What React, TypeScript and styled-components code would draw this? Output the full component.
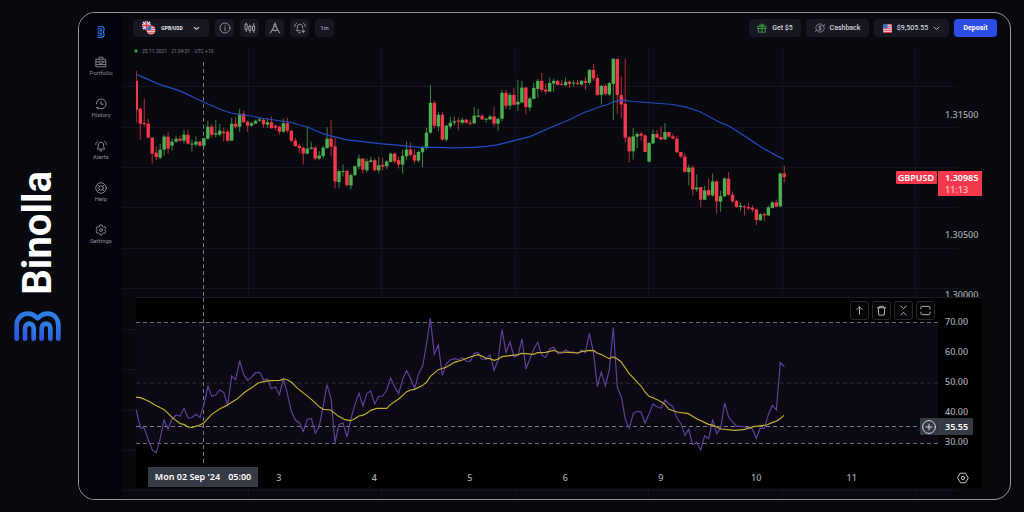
import React from "react";
import styled, { createGlobalStyle, css } from "styled-components";

const color = {
  page: "#07090e",
  sidebar: "#03030b",
  frame: "#97979b",
  control: "#171722",
  muted: "#8f8f99",
  axis: "#a9abb2",
  tag: "#363a45",
  up: "#4caf50",
  down: "#f5384b",
  accent: "#2d4de6",
  grid: "#13131f",
};

const GlobalStyle = createGlobalStyle`
  *, *::before, *::after { box-sizing: border-box; }
  body {
    margin: 0;
    background: ${color.page};
    color: #fff;
    font-family: Roboto, "Liberation Sans", sans-serif;
  }
  svg { display: block; }
`;

/* ---------- page shell ---------- */

const Page = styled.div`
  display: flex;
  min-height: 100vh;
  padding: 12px 13px 12px 0;
`;

const Brand = styled.header`
  display: flex;
  flex: 0 0 78px;
  flex-direction: column;
  align-items: center;
  justify-content: center;
  gap: 16px;
  padding-right: 3px;
`;

const BrandName = styled.h1`
  margin: 0;
  font-size: 40px;
  font-weight: 700;
  line-height: 44px;
  writing-mode: vertical-rl;
  transform: rotate(180deg);
`;

const Frame = styled.div`
  display: flex;
  flex: 1;
  min-width: 0;
  overflow: hidden;
  border: 1px solid ${color.frame};
  border-radius: 17px;
`;

const Sidebar = styled.nav`
  display: flex;
  flex: 0 0 43px;
  flex-direction: column;
  align-items: center;
  padding: 13px 0 0 1px;
  background: ${color.sidebar};
`;

const HomeLink = styled.a`
  display: block;
  margin-bottom: 18px;
`;

const NavList = styled.ul`
  display: flex;
  flex-direction: column;
  gap: 21px;
  margin: 0;
  padding: 0;
  list-style: none;
`;

const NavLink = styled.a`
  display: flex;
  flex-direction: column;
  align-items: center;
  gap: 1px;
  color: ${color.muted};
  font-size: 6px;
  line-height: 8px;
  text-decoration: none;
`;

const Main = styled.main`
  position: relative;
  flex: 1;
  min-width: 0;
  padding-bottom: 11px;
`;

const Backdrop = styled.svg`
  position: absolute;
  inset: 0;
  width: 100%;
  height: 100%;
`;

/* ---------- top bar ---------- */

const TopBar = styled.div`
  position: relative;
  display: flex;
  justify-content: space-between;
  padding: 6px 13px 0 11px;
`;

const Group = styled.div<{ $gap: number }>`
  display: flex;
  gap: ${(p) => p.$gap}px;
`;

const Control = styled.button<{ $width: number; $primary?: boolean }>`
  display: flex;
  align-items: center;
  justify-content: center;
  gap: 5px;
  width: ${(p) => p.$width}px;
  height: 18px;
  padding: 0;
  border: 0;
  border-radius: 4px;
  background: ${(p) => (p.$primary ? color.accent : color.control)};
  color: ${(p) => (p.$primary ? "#fff" : "#d0d0d6")};
  font: ${(p) => (p.$primary ? 700 : 500)} 7px/10px Roboto, sans-serif;
`;

const IconControl = styled(Control)`
  color: #9c9ca6;
  font-size: 6px;
`;

const PairName = styled.span`
  margin: 0 5px 0 0;
  color: #e8e8ec;
  font-size: 5px;
  font-weight: 700;
`;

const Status = styled.div`
  position: relative;
  display: flex;
  align-items: center;
  gap: 4px;
  height: 10px;
  margin: 9px 0 0 12px;
  color: #80808a;
  font-size: 5px;
  line-height: 10px;
`;

const LiveDot = styled.span`
  width: 4px;
  height: 4px;
  border: 1px solid #1f5a26;
  border-radius: 50%;
  background: #4fc45a;
`;

/* ---------- panes ---------- */

const Pane = styled.section<{ $height: number; $solid?: boolean; $ruled?: boolean }>`
  position: relative;
  display: flex;
  height: ${(p) => p.$height}px;
  margin: 0 28px 0 14px;
  background: ${(p) => (p.$solid ? "#000" : "transparent")};
  ${(p) =>
    p.$ruled &&
    css`
      border-bottom: 1px solid #1b1c26;
    `}
`;

const Plot = styled.div`
  position: relative;
  flex: 1;
  min-width: 0;
`;

const PlotSvg = styled.svg`
  width: 100%;
  height: 100%;
`;

const Scale = styled.div`
  position: relative;
  flex: 0 0 44px;
`;

const Ticks = styled.ul<{ $row: number; $top: number }>`
  height: 100%;
  margin: 0;
  padding: ${(p) => p.$top}px 0 0 7px;
  overflow: hidden;
  list-style: none;
  color: ${color.axis};
  font: 500 9px/${(p) => p.$row}px "Noto Sans", sans-serif;
`;

const PriceTag = styled.div`
  position: absolute;
  top: 115px;
  left: 0;
  width: 44px;
  padding: 0 0 0 7px;
  background: ${color.down};
  font: 600 9px/13px "Noto Sans", sans-serif;
`;

const Countdown = styled.div`
  color: #fbc3c9;
  font-weight: 500;
  line-height: 12px;
`;

const SymbolTag = styled.div`
  position: absolute;
  top: 115px;
  right: 1px;
  padding: 0 3px 0 2px;
  border-radius: 1px;
  background: ${color.down};
  font: 600 9px/13px "Noto Sans", sans-serif;
`;

const CrossValue = styled.div`
  position: absolute;
  top: 120px;
  left: -18px;
  display: flex;
  width: 53px;
  height: 17px;
  border-radius: 1px;
  background: ${color.tag};
  font: 600 9px/17px "Noto Sans", sans-serif;
`;

const AddButton = styled.button`
  display: grid;
  place-items: center;
  width: 18px;
  margin-right: 7px;
  padding: 0;
  border: 0;
  border-right: 1px solid #2a2d37;
  background: none;
  color: #d5d7dd;
`;

const PaneTools = styled.div`
  position: absolute;
  top: 3px;
  right: 3px;
  display: flex;
  gap: 3px;
`;

const ToolButton = styled.button`
  display: grid;
  place-items: center;
  width: 19px;
  height: 19px;
  padding: 0;
  border: 1px solid #27272c;
  border-radius: 3px;
  background: #040406;
  color: #bfc0c5;
`;

const Days = styled.ol`
  display: grid;
  flex: 1;
  grid-template-columns: 190fr repeat(7, 191fr) 77fr;
  margin: 0;
  padding: 0;
  list-style: none;
  color: ${color.axis};
  font: 500 9px/20px "Noto Sans", sans-serif;
  text-align: center;
`;

const Day = styled.li<{ $first?: boolean }>`
  ${(p) => p.$first && "grid-column-start: 2;"}
`;

const TimeTag = styled.time`
  position: absolute;
  top: -1px;
  left: 12px;
  display: flex;
  align-items: center;
  justify-content: center;
  gap: 8px;
  width: 110px;
  height: 20px;
  background: ${color.tag};
  font: 600 9px/20px "Noto Sans", sans-serif;
`;

const ScaleSettings = styled.button`
  display: grid;
  flex: 0 0 44px;
  place-items: center;
  padding: 0 0 0 6px;
  border: 0;
  background: none;
  color: #c5c6cb;
`;

/* ---------- icons ---------- */

type IconProps = { size?: number; width?: number; box?: number; children: React.ReactNode };

const Icon = ({ size = 12, width = 2, box = 24, children }: IconProps) => (
  <svg
    width={size}
    height={size}
    viewBox={`0 0 ${box} ${box}`}
    fill="none"
    stroke="currentColor"
    strokeWidth={width}
    strokeLinecap="round"
    strokeLinejoin="round"
    aria-hidden="true"
  >
    {children}
  </svg>
);

const LogoPaths = ({ id }: { id: string }) => (
  <>
    <defs>
      <linearGradient id={id} x1="0" y1="1" x2="0.5" y2="0">
        <stop offset="0" stopColor="#2f55e6" />
        <stop offset="1" stopColor="#2e7ee2" />
      </linearGradient>
    </defs>
    <g fill="none" stroke={`url(#${id})`} strokeWidth="14" strokeLinecap="round" strokeLinejoin="round">
      <path d="M8 83V43C8 21 23 8 41 8c14 0 22 6 30 14C79 14 87 8 101 8c18 0 32 13 32 35v40" />
      <path d="M33 83V51c0-8 6-13 13-13s13 5 13 13v32" />
      <path d="M83 83V51c0-8 6-13 13-13s13 5 13 13v32" />
    </g>
  </>
);

const BriefcaseIcon = () => (
  <Icon width={1.8}>
    <path d="M8 6V2.500h8V6M2.500 6.500h19v15h-19zM3 11.500h5M16 11.500h5M3 17h18" />
    <ellipse cx="12" cy="12.500" rx="4" ry="2.400" />
  </Icon>
);
const HistoryIcon = () => (
  <Icon width={1.9}>
    <path d="M2.500 12a9.800 9.800 0 1 1 3.300 7.200M12 7v5.500h4.500M2.500 19l3.300.5.300 3" />
  </Icon>
);
const BellShape = () => (
  <path d="M5 17.500c1.500-2 1.800-4 1.800-7.500 0-3.500 2-5.500 5.200-5.500s5.200 2 5.200 5.500c0 3.500.3 5.500 1.800 7.500zM10 21.500h4M1.500 9c0-3 1-5 3.500-6.500M22.500 9c0-3-1-5-3.500-6.500" />
);
const BellIcon = () => (
  <Icon width={1.9}>
    <BellShape />
  </Icon>
);
const HelpIcon = () => (
  <Icon width={1.8}>
    <circle cx="12" cy="12" r="10.500" />
    <circle cx="12" cy="12" r="4.500" />
    <path d="M5 5l3.800 3.800M19 5l-3.800 3.800M5 19l3.800-3.800M19 19l-3.800-3.800" />
  </Icon>
);
const GearIcon = () => (
  <Icon width={1.8}>
    <path d="M10 2h4l.8 3 2.200 1.300 3-.9 2 3.500L19.800 11v2l2.200 2.100-2 3.500-3-.9-2.200 1.300-.8 3h-4l-.8-3L7 17.700l-3 .9-2-3.500L4.200 13v-2L2 8.900l2-3.500 3 .9L9.200 5z" />
    <circle cx="12" cy="12" r="3" />
  </Icon>
);
const InfoIcon = () => (
  <Icon width={1.8}>
    <circle cx="12" cy="12" r="10" />
    <path d="M12 11v6M12 7v.5" />
  </Icon>
);
const CandlesIcon = () => (
  <Icon width={2}>
    <path d="M4.500 2v2M4.500 15v4M12 6v3M12 17v4M19.500 3v5M19.500 17v4" />
    <path d="M2.800 4h3.400v11H2.800zM10.300 9h3.400v8h-3.400zM17.800 8h3.400v9h-3.400z" />
  </Icon>
);
const CompassIcon = () => (
  <Icon width={2.200}>
    <path d="M12 1.500V4M10.500 8.500L3 21.500M13.500 8.500L21 21.500M6.500 15.500c3.700 2.300 7.300 2.300 11 0" />
    <circle cx="12" cy="6.300" r="2.300" />
  </Icon>
);
const AddAlertIcon = () => (
  <Icon width={1.9}>
    <path d="M12 17.500H5c1.500-2 1.800-4 1.800-7.500 0-3.500 2-5.500 5.200-5.500s5.200 2 5.200 5.500v2M9.500 21.500h3M1.500 9c0-3 1-5 3.500-6.500M22.500 9c0-3-1-5-3.500-6.500M18.500 15.500v6M15.500 18.500h6" />
  </Icon>
);
const GiftIcon = () => (
  <Icon size={10}>
    <g stroke="#3fa64c">
      <path d="M2 8h20v5H2zM4 13h16v9H4zM12 8v14M12 8C8 8 6 6 7 3.500 8.500 1 12 3 12 8c0-5 3.500-7 5-4.500C18 6 16 8 12 8" />
    </g>
  </Icon>
);
const CashbackIcon = () => (
  <Icon size={10} width={1.700}>
    <g stroke="#a4a4ac">
      <path d="M3 16.500A10 10 0 0 1 17 3.300M21 7.500A10 10 0 0 1 7 20.700M1.500 20.500l1.500-4 4 1.500M22.500 3.500l-1.500 4-4-1.500" />
      <path d="M15 9c-.6-1.200-1.700-1.600-3-1.600-3.800 0-4 4 0 4.500 4.200.5 4 4.700 0 4.700-1.400 0-2.500-.5-3-1.700M12 6v12" />
    </g>
  </Icon>
);
const Chevron = ({ width }: { width: number }) => (
  <Icon size={7} width={width}>
    <path d="M4 8l8 7 8-7" />
  </Icon>
);
const PlusIcon = () => (
  <Icon size={14} width={1.700}>
    <circle cx="12" cy="12" r="11" />
    <path d="M12 7v10M7 12h10" />
  </Icon>
);
const HexIcon = () => (
  <Icon size={12}>
    <path d="M7 2.500h10L22.500 12 17 21.500H7L1.500 12z" />
    <circle cx="12" cy="12" r="3.200" />
  </Icon>
);

const UsFlag = ({ clip }: { clip: string }) => (
  <g clipPath={`url(#${clip})`}>
    <rect width="18" height="18" fill="#f1e9ea" />
    <path d="M0 1.500h18M0 5.500h18M0 9.500h18M0 13.500h18M0 17h18" stroke="#df3b4c" strokeWidth="2" />
    <rect width="9" height="9" fill="#3a6fc0" />
  </g>
);

const PairFlags = () => (
  <svg width="14" height="14" viewBox="0 0 28 28" aria-hidden="true">
    <defs>
      <clipPath id="uk-clip">
        <rect width="18" height="18" rx="7" />
      </clipPath>
      <clipPath id="us-clip">
        <circle cx="9" cy="9" r="9" />
      </clipPath>
    </defs>
    <g clipPath="url(#uk-clip)">
      <rect width="18" height="18" fill="#2d4fa0" />
      <path d="M0 0l18 18M18 0L0 18" stroke="#f3eef0" strokeWidth="3" />
      <path d="M9 0v18M0 9h18" stroke="#f3eef0" strokeWidth="5" />
      <path d="M9 0v18M0 9h18" stroke="#e03648" strokeWidth="3.200" />
    </g>
    <g transform="translate(9 9)">
      <UsFlag clip="us-clip" />
    </g>
  </svg>
);

const BalanceFlag = () => (
  <svg width="9" height="9" viewBox="0 0 18 18" aria-hidden="true">
    <defs>
      <clipPath id="balance-clip">
        <rect width="18" height="18" rx="5" />
      </clipPath>
    </defs>
    <UsFlag clip="balance-clip" />
  </svg>
);

/* ---------- chart data ---------- */

const FIRST_X = 136.3;
const STEP = 3.975;

/* One hourly candle: direction, high, body top, body bottom, low. */
type Candle = ["u" | "d", number, number, number, number];

const candles: Candle[] = [
  ["d", 71, 81, 110, 123], ["d", 108, 109, 124, 140], ["d", 99, 123.3, 124.5, 127], ["d", 119, 124, 138, 138.5],
  ["d", 137.5, 138, 154, 164], ["d", 147, 153, 157.5, 160.5], ["u", 144, 150, 158, 159.5], ["u", 135, 137, 150, 156],
  ["d", 132, 137, 149, 154], ["u", 139, 142, 146, 151], ["u", 136, 139, 142, 143], ["d", 136, 139, 141, 142],
  ["u", 130, 135, 141, 144], ["d", 130, 135, 144, 145], ["u", 140, 144, 145, 152], ["u", 137, 142, 145, 147],
  ["d", 141, 142, 146, 147], ["u", 138, 138.5, 146, 146], ["u", 121, 127, 139, 140], ["d", 124, 127, 135, 138],
  ["u", 120, 133.5, 135, 138], ["u", 124, 131, 135, 137], ["d", 128, 132, 133.5, 141.5], ["d", 130, 132, 141, 142],
  ["u", 118, 124, 141, 141], ["d", 117, 124, 127, 129], ["u", 109, 114, 127, 132], ["d", 110.5, 114, 122.5, 123],
  ["d", 121, 122, 126, 132], ["u", 122, 123.5, 126, 127], ["u", 120, 121, 124, 124], ["u", 118, 119.7, 121, 122],
  ["d", 119, 120, 124.5, 128], ["u", 118, 122.5, 125, 128], ["d", 117, 122.5, 128.5, 129], ["d", 125, 126, 128, 131],
  ["d", 126, 127, 132, 135], ["u", 119, 123.5, 132, 133], ["d", 118, 123.5, 131, 133], ["d", 130.5, 131, 141, 143],
  ["d", 138, 141, 146.5, 147], ["d", 144, 146, 148.5, 154], ["d", 147, 148, 154, 165], ["u", 127, 149, 154, 155],
  ["u", 142, 148, 149.3, 150], ["d", 146.5, 148, 159, 161], ["u", 151.5, 156, 159, 160.5], ["u", 146, 148, 156.5, 159],
  ["u", 127.5, 139, 148.5, 149], ["d", 120, 139, 147, 156], ["d", 137.7, 146.7, 182, 189], ["u", 170, 171.7, 182.7, 189],
  ["u", 165, 171.5, 172.5, 177], ["d", 170, 171.5, 185.7, 187], ["u", 174, 175.5, 186, 190], ["u", 166, 166.7, 175.7, 176],
  ["u", 155, 159, 167, 170], ["d", 159, 159, 170, 174], ["u", 159, 161.7, 170.7, 173], ["u", 157, 160.7, 162.3, 163],
  ["d", 158.7, 160.7, 170.7, 172], ["u", 157, 165.7, 170.7, 174], ["d", 158, 165.3, 167, 171], ["u", 160.7, 162, 166.7, 169.7],
  ["u", 153, 154, 162.3, 163], ["d", 153, 154, 161.7, 164], ["d", 157, 160.7, 165, 169], ["u", 150, 156.3, 165, 174],
  ["u", 142, 150, 156.7, 160.7], ["d", 142.7, 150, 155.3, 157], ["d", 149, 155.3, 161, 164], ["u", 151, 152.3, 161, 163],
  ["u", 146, 147.7, 152.7, 167.7], ["u", 128, 133, 148, 150], ["u", 85, 103, 133, 134], ["d", 101, 103, 126, 129],
  ["u", 112, 115, 126.7, 131.7], ["d", 112, 115, 140, 141], ["u", 125, 126, 140, 142], ["u", 117, 123, 126.7, 129],
  ["u", 116.7, 121.7, 123, 125.7], ["d", 117.7, 120.7, 122, 130.7], ["u", 117.7, 120, 123, 125], ["d", 119, 120, 123, 124],
  ["d", 120, 123, 124, 126], ["u", 107, 116, 123.7, 124], ["u", 109, 115.7, 117, 118], ["d", 114, 116, 119.7, 120],
  ["u", 118, 119, 120, 123], ["u", 115, 116.7, 119.7, 120], ["d", 107, 116.7, 124, 126.7], ["u", 118, 119, 124, 131],
  ["u", 90, 93, 119, 121.7], ["d", 89.7, 93, 106, 109], ["u", 93, 95, 105.7, 110], ["d", 87.7, 95, 105, 106],
  ["u", 80, 102, 104.7, 111], ["u", 81, 87.7, 102.7, 103], ["d", 87, 87.7, 107.3, 114.7], ["u", 97, 98.7, 107.7, 111],
  ["u", 83, 88, 99, 99.5], ["u", 79, 81, 89, 98], ["d", 73, 81, 90, 92.7], ["d", 83.7, 89.7, 91.7, 94],
  ["u", 77.7, 83, 91.7, 92], ["u", 78.7, 81, 83.7, 92.3], ["d", 80, 81, 85, 85.3], ["d", 80.3, 84, 84.9, 85.7],
  ["u", 77.3, 82, 85.3, 86.3], ["d", 80.7, 81.7, 84, 88.3], ["u", 80.3, 82.7, 83.7, 86.7], ["d", 80, 83, 83.9, 85.3],
  ["u", 80, 81, 84.7, 85.7], ["d", 77.3, 81, 83, 90], ["u", 69, 70, 83, 84.7], ["d", 63.7, 70, 78.3, 81],
  ["d", 74.7, 78, 95, 96.7], ["u", 85, 86, 95, 104.7], ["d", 83.7, 86, 94, 95.7], ["u", 82, 83.3, 94.7, 96],
  ["u", 58.7, 58.7, 84, 120], ["d", 58.7, 59, 95, 113.7], ["d", 76.7, 95, 104.7, 118], ["d", 58.7, 104, 138, 143],
  ["d", 136, 137.7, 151.7, 163], ["u", 128.3, 136.7, 151.7, 160], ["u", 132.3, 134.3, 137, 148.7], ["d", 132.3, 134, 136, 141],
  ["d", 134.3, 135.7, 152.3, 152.7], ["u", 142.7, 143.3, 162, 162.7], ["u", 129.7, 134.3, 143.7, 144.7], ["d", 130.3, 134.3, 138, 138.7],
  ["d", 126.7, 137.3, 140, 140.3], ["u", 123.3, 132.3, 139.7, 140.3], ["d", 132, 132.3, 137, 138.3], ["d", 134, 136.7, 138.7, 140],
  ["d", 136, 139, 152.7, 153], ["d", 152, 152.5, 157, 158.9], ["d", 154, 157, 172.3, 172.7], ["u", 165, 168, 172.7, 186],
  ["d", 166, 168, 190, 196], ["u", 175, 188, 190, 192.3], ["d", 187.3, 187.7, 200.3, 208], ["u", 186.3, 191, 200.3, 200.7],
  ["d", 179, 190.7, 195.7, 197], ["u", 174, 182, 196, 197.3], ["d", 180.7, 182, 202, 214.3], ["u", 191.3, 196.7, 202.3, 212.3],
  ["u", 178, 179, 197, 197], ["d", 172.7, 179, 195.3, 196.3], ["d", 192, 195.3, 202, 203.3], ["d", 200.3, 201.7, 207.7, 208.3],
  ["u", 203, 206.3, 207.7, 211.3], ["d", 205.7, 207, 208, 216], ["d", 203.3, 207.7, 209, 210.7], ["d", 206, 208.3, 210.3, 212.7],
  ["d", 209.3, 210, 220.7, 226], ["u", 213.7, 215, 221, 221], ["d", 213.3, 214.7, 216, 221.7], ["u", 206, 208, 216, 216.7],
  ["u", 202, 203, 208.7, 209], ["d", 200, 203, 207.3, 208], ["u", 173, 174, 207, 208], ["d", 166.3, 174, 177.7, 183],
];

const movingAverage =
  "136,74.500 147,79 158,84 180,91 203,102 220,109.500 230,113 240,115 250,116 262,118.500 290,122.500 308,127.500 323,134 330,136 347,140.300 360,141.700 380,144 405,146.300 420,147.800 437,147.800 453,148.200 473,147.700 487,146.700 497,145.300 510,142 530,137 550,128 567,121 583,113.300 600,107 608,104.700 613,102 623,100.400 633,101.700 647,102.700 673,104.700 687,107.600 700,112 720,122.700 730,126.700 743,135.300 763,148.700 777,156.300 784,159.700";

/* Oscillator readings, one per candle, in thirds of a pixel. */
const rsi = [
  360, 413, 415, 450, 480, 488, 448, 390, 418, 388, 375, 378, 355, 384, 383, 373, 382, 342, 289, 319, 315, 300, 307,
  346, 258, 269, 212, 254, 271, 261, 248, 247, 270, 267, 296, 290, 314, 267, 310, 364, 390, 398, 424, 388, 385, 430,
  412, 352, 284, 325, 457, 403, 399, 441, 385, 343, 309, 348, 310, 303, 342, 319, 318, 300, 264, 291, 311, 268, 242,
  266, 295, 251, 228, 165, 85, 193, 165, 256, 221, 210, 206, 209, 203, 213, 214, 190, 187, 207, 208, 194, 241, 212,
  119, 187, 156, 201, 196, 147, 237, 208, 178, 157, 195, 203, 177, 172, 190, 190, 180, 187, 186, 190, 180, 188, 130,
  185, 290, 246, 288, 238, 113, 293, 320, 388, 415, 370, 364, 366, 399, 372, 342, 350, 355, 330, 342, 350, 385, 401,
  436, 418, 464, 457, 480, 437, 446, 388, 431, 415, 339, 382, 396, 409, 409, 411, 413, 417, 445, 414, 416, 374, 346,
  360, 217, 231,
];

const rsiAverage =
  "407,321 421,323 445,333 469,347 493,359 517,383 541,401 553,404 564,411 576,412 595,407 610,400 635,373 660,356 683,345 695,337 710,328 735,306 755,293 775,279 790,275 810,272 840,271 851,267 863,270 875,277 890,293 935,329 960,352 970,358 992,360 1016,379 1035,389 1052,392 1064,387 1076,378 1088,376 1100,370 1112,361 1130,355 1160,355 1172,343 1196,327 1220,305 1232,300 1244,298 1268,286 1280,276 1291,259 1315,239 1340,231 1363,217 1387,210 1410,201 1434,194 1446,198 1458,205 1470,206 1482,211 1494,208 1506,200 1529,197 1554,194 1565,190 1600,193 1613,188 1637,187 1661,181 1673,186 1710,187 1733,189 1745,185 1769,181 1781,182 1793,190 1803,193 1827,206 1839,201 1851,206 1863,215 1887,250 1923,288 1935,306 1947,319 1959,323 1975,331 1993,341 2007,358 2031,366 2065,371 2090,386 2126,403 2140,406 2162,417 2205,421 2234,418 2260,410 2300,405 2316,398 2330,393 2340,386 2352,376";

const gridX = [248, 381, 515, 648, 782, 915];
const gridY = [86, 127, 167, 207, 248, 288, 329, 369, 410, 450, 490];

const ChartGrid = () => (
  <Backdrop viewBox="122 13 888 486" preserveAspectRatio="none" aria-hidden="true">
    <g stroke={color.grid} strokeWidth="1">
      {gridX.map((x) => (
        <path key={x} d={`M${x + 0.5} 46V499`} />
      ))}
      {gridY.map((y) => (
        <path key={y} d={`M122 ${y + 0.5}H958`} />
      ))}
    </g>
  </Backdrop>
);

const PricePlot = () => (
  <PlotSvg viewBox="136 56 802 242" preserveAspectRatio="none" role="img" aria-label="GBP/USD price">
    <path d="M203.500 62V298" stroke="#7c7d84" strokeDasharray="4 3" />
    {candles.map(([dir, high, top, bottom, low], i) => {
      const x = FIRST_X + i * STEP;
      const fill = dir === "u" ? color.up : color.down;
      return (
        <g key={i} fill={fill}>
          <rect x={x - 0.5} y={high} width="1" height={low - high} opacity="0.75" />
          <rect x={x - 1.7} y={top} width="3.400" height={Math.max(1, bottom - top)} />
        </g>
      );
    })}
    <polyline points={movingAverage} fill="none" stroke="#244cc4" strokeWidth="1.200" />
  </PlotSvg>
);

const RsiPlot = () => (
  <PlotSvg viewBox="408 24 2406 510" preserveAspectRatio="none" role="img" aria-label="Relative strength index">
    <rect x="408" y="97" width="2406" height="363" fill="#0c0914" />
    <g strokeWidth="3" strokeDasharray="12 9">
      <path d="M408 97.500H2814M408 460.500H2814" stroke="#6d6d76" />
      <path d="M408 279.500H2814" stroke="#2d2b35" />
      <path d="M408 409.500H2760" stroke="#7c7d84" />
      <path d="M610.500 24V520" stroke="#7c7d84" />
    </g>
    <polyline
      points={rsi.map((y, i) => `${Math.round(3 * (FIRST_X + i * STEP))},${y}`).join(" ")}
      fill="none"
      stroke="#61429a"
      strokeWidth="3.500"
    />
    <polyline points={rsiAverage} fill="none" stroke="#c4b02f" strokeWidth="3.500" />
  </PlotSvg>
);

/* ---------- app ---------- */

const navItems = [
  { label: "Portfolio", icon: <BriefcaseIcon /> },
  { label: "History", icon: <HistoryIcon /> },
  { label: "Alerts", icon: <BellIcon /> },
  { label: "Help", icon: <HelpIcon /> },
  { label: "Settings", icon: <GearIcon /> },
];

const tools = [
  { label: "Move pane up", path: "M12 20V4M6 10l6-6 6 6" },
  { label: "Delete pane", path: "M3 6h18M8 6V3h8v3M5 6l1 16h12l1-16" },
  { label: "Collapse pane", path: "M6 2l6 6 6-6M6 22l6-6 6 6" },
  {
    label: "Maximize pane",
    path: "M2 8.500V6a3 3 0 0 1 3-3h14a3 3 0 0 1 3 3v2.500M22 15.500V18a3 3 0 0 1-3 3H5a3 3 0 0 1-3-3v-2.500",
  },
];

const days = ["3", "4", "5", "6", "9", "10", "11"];

export default function App() {
  return (
    <>
      <GlobalStyle />
      <Page>
        <Brand>
          <BrandName>Binolla</BrandName>
          <svg width="47" height="30" viewBox="0 0 141 90" aria-hidden="true">
            <LogoPaths id="brand-blue" />
          </svg>
        </Brand>
        <Frame>
          <Sidebar aria-label="Main">
            <HomeLink href="#home" aria-label="Home">
              <svg width="8" height="12" viewBox="0 0 90 141" aria-hidden="true">
                <g transform="translate(90 0) rotate(90)">
                  <LogoPaths id="home-blue" />
                </g>
              </svg>
            </HomeLink>
            <NavList>
              {navItems.map((item) => (
                <li key={item.label}>
                  <NavLink href={`#${item.label.toLowerCase()}`}>
                    {item.icon}
                    {item.label}
                  </NavLink>
                </li>
              ))}
            </NavList>
          </Sidebar>
          <Main>
            <ChartGrid />
            <TopBar>
              <Group $gap={6}>
                <Control $width={76}>
                  <PairFlags />
                  <PairName>GPB/USD</PairName>
                  <Chevron width={4} />
                </Control>
                <IconControl $width={19} aria-label="Info">
                  <InfoIcon />
                </IconControl>
                <IconControl $width={19} aria-label="Chart type">
                  <CandlesIcon />
                </IconControl>
                <IconControl $width={19} aria-label="Drawing tools">
                  <CompassIcon />
                </IconControl>
                <IconControl $width={19} aria-label="Add alert">
                  <AddAlertIcon />
                </IconControl>
                <IconControl $width={19}>1m</IconControl>
              </Group>
              <Group $gap={5}>
                <Control $width={52}>
                  <GiftIcon />
                  Get $5
                </Control>
                <Control $width={63}>
                  <CashbackIcon />
                  Cashback
                </Control>
                <Control $width={75}>
                  <BalanceFlag />
                  $9,505.55
                  <Chevron width={3} />
                </Control>
                <Control $width={43} $primary>
                  Deposit
                </Control>
              </Group>
            </TopBar>
            <Status>
              <LiveDot />
              <span>25.11.2021</span>
              <span>21:04:31</span>
              <span>UTC +10</span>
            </Status>
            <Pane $height={242} $ruled>
              <Plot>
                <PricePlot />
                <SymbolTag>GBPUSD</SymbolTag>
              </Plot>
              <Scale>
                <Ticks $row={60} $top={29}>
                  <li>1.31500</li>
                  <li>&nbsp;</li>
                  <li>1.30500</li>
                  <li>1.30000</li>
                </Ticks>
                <PriceTag>
                  1.30985
                  <Countdown>11:13</Countdown>
                </PriceTag>
              </Scale>
            </Pane>
            <Pane $height={170} $solid>
              <Plot>
                <RsiPlot />
                <PaneTools>
                  {tools.map((tool) => (
                    <ToolButton key={tool.label} aria-label={tool.label}>
                      <Icon size={11}>
                        <path d={tool.path} />
                      </Icon>
                    </ToolButton>
                  ))}
                </PaneTools>
              </Plot>
              <Scale>
                <Ticks $row={30} $top={9}>
                  <li>70.00</li>
                  <li>60.00</li>
                  <li>50.00</li>
                  <li>40.00</li>
                  <li>30.00</li>
                </Ticks>
                <CrossValue>
                  <AddButton aria-label="Add at level">
                    <PlusIcon />
                  </AddButton>
                  35.55
                </CrossValue>
              </Scale>
            </Pane>
            <Pane $height={20} $solid>
              <Days>
                {days.map((day, i) => (
                  <Day key={day} $first={i === 0}>
                    {day}
                  </Day>
                ))}
              </Days>
              <ScaleSettings aria-label="Scale settings">
                <HexIcon />
              </ScaleSettings>
              <TimeTag>
                <span>Mon 02 Sep '24</span>
                <span>05:00</span>
              </TimeTag>
            </Pane>
          </Main>
        </Frame>
      </Page>
    </>
  );
}
